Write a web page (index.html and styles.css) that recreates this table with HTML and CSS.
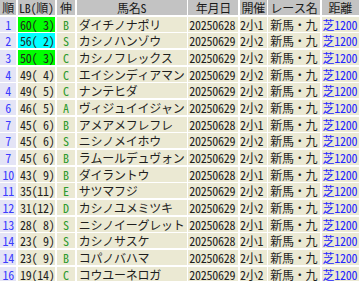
FILE: index.html
```html
<!DOCTYPE html>
<html lang="ja">
<head>
<meta charset="utf-8">
<link rel="stylesheet" href="styles.css">
</head>
<body>
<div class="tbl">
  <div class="h">順</div><div class="h">LB(順)</div><div class="h">伸</div><div class="h">馬名S</div><div class="h">年月日</div><div class="h">開催</div><div class="h">レース名</div><div class="h">距離</div>

  <div class="rk">1</div><div class="lb g">60( 3)</div><div class="nb">B</div><div class="nm">ダイチノナポリ</div><div class="dt">20250628</div><div class="kk">2小1</div><div class="rn">新馬・九</div><div class="ds">芝1200</div>
  <div class="rk">2</div><div class="lb c">56( 2)</div><div class="nb">S</div><div class="nm">カシノハンゾウ</div><div class="dt">20250629</div><div class="kk">2小2</div><div class="rn">新馬・九</div><div class="ds">芝1200</div>
  <div class="rk">3</div><div class="lb g">50( 3)</div><div class="nb">C</div><div class="nm">カシノフレックス</div><div class="dt">20250629</div><div class="kk">2小2</div><div class="rn">新馬・九</div><div class="ds">芝1200</div>
  <div class="rk">4</div><div class="lb">49( 4)</div><div class="nb">C</div><div class="nm">エイシンディアマン</div><div class="dt">20250629</div><div class="kk">2小2</div><div class="rn">新馬・九</div><div class="ds">芝1200</div>
  <div class="rk">4</div><div class="lb">49( 5)</div><div class="nb">C</div><div class="nm">ナンテヒダ</div><div class="dt">20250629</div><div class="kk">2小2</div><div class="rn">新馬・九</div><div class="ds">芝1200</div>
  <div class="rk">6</div><div class="lb">46( 5)</div><div class="nb">A</div><div class="nm">ヴィジュイイジャン</div><div class="dt">20250629</div><div class="kk">2小2</div><div class="rn">新馬・九</div><div class="ds">芝1200</div>
  <div class="rk">7</div><div class="lb">45( 6)</div><div class="nb">B</div><div class="nm">アメアメフレフレ</div><div class="dt">20250628</div><div class="kk">2小1</div><div class="rn">新馬・九</div><div class="ds">芝1200</div>
  <div class="rk">7</div><div class="lb">45( 6)</div><div class="nb">S</div><div class="nm">ニシノメイホウ</div><div class="dt">20250629</div><div class="kk">2小2</div><div class="rn">新馬・九</div><div class="ds">芝1200</div>
  <div class="rk">7</div><div class="lb">45( 6)</div><div class="nb">B</div><div class="nm">ラムールデュヴォン</div><div class="dt">20250629</div><div class="kk">2小2</div><div class="rn">新馬・九</div><div class="ds">芝1200</div>
  <div class="rk">10</div><div class="lb">43( 9)</div><div class="nb">B</div><div class="nm">ダイラントウ</div><div class="dt">20250628</div><div class="kk">2小1</div><div class="rn">新馬・九</div><div class="ds">芝1200</div>
  <div class="rk">11</div><div class="lb">35(11)</div><div class="nb">E</div><div class="nm">サツマフジ</div><div class="dt">20250629</div><div class="kk">2小2</div><div class="rn">新馬・九</div><div class="ds">芝1200</div>
  <div class="rk">12</div><div class="lb">31(12)</div><div class="nb">D</div><div class="nm">カシノユメミツキ</div><div class="dt">20250629</div><div class="kk">2小2</div><div class="rn">新馬・九</div><div class="ds">芝1200</div>
  <div class="rk">13</div><div class="lb">28( 8)</div><div class="nb">S</div><div class="nm">ニシノイーグレット</div><div class="dt">20250628</div><div class="kk">2小1</div><div class="rn">新馬・九</div><div class="ds">芝1200</div>
  <div class="rk">14</div><div class="lb">23( 9)</div><div class="nb">S</div><div class="nm">カシノサスケ</div><div class="dt">20250628</div><div class="kk">2小1</div><div class="rn">新馬・九</div><div class="ds">芝1200</div>
  <div class="rk">14</div><div class="lb">23( 9)</div><div class="nb">B</div><div class="nm">コパノバハマ</div><div class="dt">20250628</div><div class="kk">2小1</div><div class="rn">新馬・九</div><div class="ds">芝1200</div>
  <div class="rk">16</div><div class="lb">19(14)</div><div class="nb">C</div><div class="nm">コウユーネロガ</div><div class="dt">20250629</div><div class="kk">2小2</div><div class="rn">新馬・九</div><div class="ds">芝1200</div>
</div>
</body>
</html>
```

FILE: styles.css
```css
html, body {
  margin: 0;
  padding: 0;
  background: #ffffff;
  overflow: hidden;
}
.tbl {
  display: grid;
  grid-template-columns: 16.33px 37px 18.33px 110px 50px 26.67px 51.67px 37.33px;
  grid-auto-rows: 15px;
  gap: 1.667px;
  font-family: "Noto Sans Mono CJK JP", "Noto Sans CJK JP", monospace;
  font-size: 12px;
  letter-spacing: -0.25px;
  line-height: 15px;
  color: #1e1e1e;
  white-space: nowrap;
  width: 359px;
}
.tbl > div {
  background: #ebe9d3;
  overflow: hidden;
}
.tbl > .h {
  background: #c3c3c3;
  text-align: center;
  color: #1a1a1a;
}
.rk {
  text-align: center;
  color: #3b3bff;
}
.tbl > .rk {
  background: #e4e4f6;
}
.lb {
  padding-left: 2px;
  white-space: pre;
}
.tbl > .g { background: #00ff00; }
.tbl > .c { background: #00ffff; }
.nb {
  text-align: center;
  color: #2e9a2e;
}
.nm { padding-left: 2px; }
.dt { padding-left: 1px; }
.kk { padding-left: 0; }
.rn { padding-left: 2px; }
.ds {
  padding-left: 1px;
  color: #2525ff;
}
```
